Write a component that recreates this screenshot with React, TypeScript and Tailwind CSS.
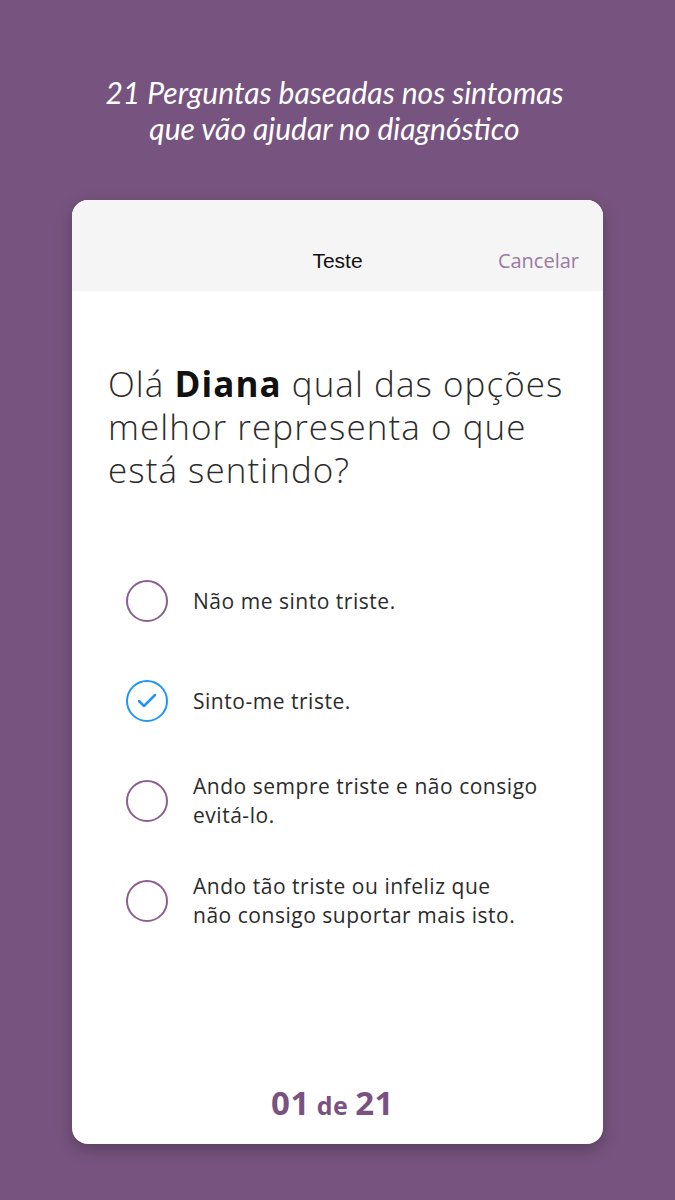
import { Check } from 'lucide-react';

const options = [
    { id: 1, text: 'Não me sinto triste.', checked: false },
    { id: 2, text: 'Sinto-me triste.', checked: true },
    { id: 3, text: 'Ando sempre triste e não consigo\nevitá-lo.', checked: false },
    { id: 4, text: 'Ando tão triste ou infeliz que\nnão consigo suportar mais isto.', checked: false },
];

const Radio = ({ checked }: { checked: boolean }) =>
    checked ? (
        <div className="w-[42px] h-[42px] shrink-0 rounded-full border-2 border-[#2196f3] flex items-center justify-center text-[#2196f3]">
            <Check size={24} strokeWidth={2.5} />
        </div>
    ) : (
        <div className="w-[42px] h-[42px] shrink-0 rounded-full border-2 border-[#8c5f92]" />
    );

export default function App() {
    return (
        <div className="w-[675px] h-[1200px] bg-[#77547f] flex flex-col items-center overflow-hidden">
            <h1
                className="mt-[74px] mr-[6px] text-white text-[30px] leading-[36px] italic text-center"
                style={{ fontFamily: 'Lato, sans-serif' }}
            >
                21 Perguntas baseadas nos sintomas
                <br />
                que vão ajudar no diagnóstico
            </h1>

            <div className="mt-[54px] w-[531px] h-[944px] bg-white rounded-[16px] overflow-hidden flex flex-col shadow-[0_6px_16px_rgba(0,0,0,0.25)]">
                <div className="h-[91px] bg-[#f5f5f5] relative flex items-center justify-center pt-[30px]">
                    <span className="text-[21px] text-[#111]" style={{ fontFamily: '"Liberation Sans", Arial, sans-serif' }}>
                        Teste
                    </span>
                    <span
                        className="absolute right-[24px] top-[46px] text-[20px] text-[#9a7aa3]"
                        style={{ fontFamily: '"Open Sans", sans-serif' }}
                    >
                        Cancelar
                    </span>
                </div>

                <div className="flex-1 flex flex-col px-[36px]" style={{ fontFamily: '"Open Sans", sans-serif' }}>
                    <p className="mt-[71px] text-[35px] leading-[43px] tracking-[0.03em] font-light text-[#2b2b2b]">
                        Olá <span className="font-bold text-[#111]">Diana</span> qual das opções
                        <br />
                        melhor representa o que
                        <br />
                        está sentindo?
                    </p>

                    <div className="mt-[81px] flex flex-col gap-[42px] pl-[18px]">
                        {options.map(opt => (
                            <div key={opt.id} className="flex items-center gap-[25px] h-[58px]">
                                <Radio checked={opt.checked} />
                                <span className="text-[21px] leading-[29px] tracking-[0.025em] text-[#2b2b2b] whitespace-pre-line">
                                    {opt.text}
                                </span>
                            </div>
                        ))}
                    </div>

                    <div className="mt-auto mb-[17px] pr-[10px] text-center text-[#7a5282] font-bold tracking-[0.03em]">
                        <span className="text-[33px]">01</span>
                        <span className="text-[25px]"> de </span>
                        <span className="text-[33px]">21</span>
                    </div>
                </div>
            </div>
        </div>
    );
}
